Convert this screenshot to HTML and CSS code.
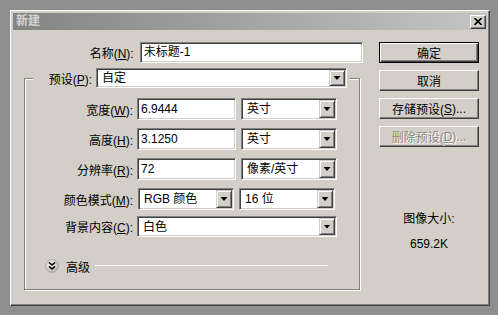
FILE: index.html
```html
<!DOCTYPE html>
<html lang="zh-CN">
<head>
    <meta charset="UTF-8">
    <title>新建</title>
    <link rel="stylesheet" href="styles.css">
</head>
<body>
    <div class="dialog">
        <div class="titlebar">
            <span class="title">新建</span>
            <span class="close-btn">
                <svg width="8" height="7" viewBox="0 0 8 7"><path d="M0.5 0 L7.5 7 M7.5 0 L0.5 7" stroke="#000" stroke-width="1.6" fill="none"/></svg>
            </span>
        </div>

        <div class="content">
            <div class="main">
                <div class="name-row">
                    <span class="name-label">名称(<u>N</u>):</span>
                    <div class="field name-field">未标题-1</div>
                </div>

                <fieldset class="group">
                    <legend class="legend">
                        <div class="preset">
                            <span class="preset-label">预设(<u>P</u>):</span>
                            <div class="select preset-select"><span class="value">自定</span><span class="arrow"></span></div>
                        </div>
                    </legend>

                    <div class="rows">
                        <div class="row">
                            <span class="label">宽度(<u>W</u>):</span>
                            <div class="field num">6.9444</div>
                            <div class="select unit"><span class="value">英寸</span><span class="arrow"></span></div>
                        </div>
                        <div class="row">
                            <span class="label">高度(<u>H</u>):</span>
                            <div class="field num">3.1250</div>
                            <div class="select unit"><span class="value">英寸</span><span class="arrow"></span></div>
                        </div>
                        <div class="row">
                            <span class="label">分辨率(<u>R</u>):</span>
                            <div class="field num">72</div>
                            <div class="select unit"><span class="value">像素/英寸</span><span class="arrow"></span></div>
                        </div>
                        <div class="row">
                            <span class="label">颜色模式(<u>M</u>):</span>
                            <div class="select mode"><span class="value">RGB 颜色</span><span class="arrow"></span></div>
                            <div class="select unit"><span class="value">16 位</span><span class="arrow"></span></div>
                        </div>
                        <div class="row row-bg">
                            <span class="label">背景内容(<u>C</u>):</span>
                            <div class="select wide"><span class="value">白色</span><span class="arrow"></span></div>
                        </div>
                    </div>

                    <div class="advanced">
                        <svg class="adv-icon" width="14" height="14" viewBox="0 0 14 14">
                            <defs>
                                <radialGradient id="knob" cx="40%" cy="35%" r="70%">
                                    <stop offset="0" stop-color="#ffffff"/>
                                    <stop offset="1" stop-color="#b4b0ac"/>
                                </radialGradient>
                            </defs>
                            <circle cx="7" cy="7" r="6.3" fill="url(#knob)" stroke="#a09c98" stroke-width="0.8"/>
                            <path d="M4 3.3 L7 6 L10 3.3 M4 7.3 L7 10 L10 7.3" fill="none" stroke="#000" stroke-width="1.6"/>
                        </svg>
                        <span class="adv-text">高级</span>
                        <span class="adv-line"></span>
                    </div>
                </fieldset>
            </div>

            <div class="side">
                <div class="btn btn-default">确定</div>
                <div class="btn">取消</div>
                <div class="btn">存储预设(<u>S</u>)...</div>
                <div class="btn btn-disabled">删除预设(<u>D</u>)...</div>

                <div class="info">
                    <div class="info-line">图像大小:</div>
                    <div class="info-line info-size">659.2K</div>
                </div>
            </div>
        </div>
    </div>
</body>
</html>
```

FILE: styles.css
```css
* {
    box-sizing: border-box;
}
body {
    margin: 0;
    width: 498px;
    height: 315px;
    overflow: hidden;
    background: #8e8e8e;
    font-family: "Liberation Sans", "Noto Sans CJK SC", sans-serif;
    font-size: 12px;
    color: #000;
}
u {
    text-decoration: underline;
}
.dialog {
    margin: 10px 0 0 10px;
    width: 480px;
    height: 296px;
    padding: 2px;
    background: #d4cec8;
    border: 1px solid;
    border-color: #fff #404040 #404040 #fff;
    box-shadow: inset -1px -1px 0 #808080;
}
.titlebar {
    height: 17px;
    display: flex;
    align-items: center;
    justify-content: space-between;
    padding: 0 1px 0 3px;
    background: linear-gradient(to right, #848484, #c4c4c4);
}
.title {
    color: #d8d4d0;
    font-weight: bold;
    line-height: 17px;
}
.close-btn {
    width: 16px;
    height: 14px;
    display: flex;
    align-items: center;
    justify-content: center;
    background: #d4cec8;
    border: 1px solid;
    border-color: #fff #404040 #404040 #fff;
    box-shadow: inset -1px -1px 0 #808080;
}
.content {
    display: flex;
    padding-top: 12px;
}
.main {
    width: 350px;
}
.side {
    width: 100px;
    margin-left: 16px;
    display: flex;
    flex-direction: column;
    gap: 7px;
}

/* sunken boxes */
.field,
.select {
    height: 22px;
    background: #fff;
    border: 1px solid;
    border-color: #808080 #fff #fff #808080;
    box-shadow: inset 1px 1px 0 #404040, inset -1px -1px 0 #d4cec8;
}
.field {
    padding: 0 3px;
    line-height: 20px;
    white-space: nowrap;
}
.select {
    display: flex;
    align-items: stretch;
    padding: 1px 1px 1px 5px;
}
.select .value {
    flex: 1;
    line-height: 18px;
    white-space: nowrap;
}
.arrow {
    width: 16px;
    display: flex;
    align-items: center;
    justify-content: center;
    background: #d4cec8;
    border: 1px solid;
    border-color: #d4cec8 #404040 #404040 #d4cec8;
    box-shadow: inset 1px 1px 0 #fff, inset -1px -1px 0 #808080;
}
.arrow::after {
    content: "";
    width: 7px;
    height: 4px;
    background: #000;
    clip-path: polygon(0 0, 100% 0, 50% 100%);
}

/* name */
.name-row {
    display: flex;
    align-items: center;
}
.name-label {
    width: 127px;
    padding-right: 6px;
    text-align: right;
}
.name-field {
    width: 224px;
    height: 21px;
    line-height: 19px;
}

/* group box */
.group {
    margin: 5px 0 0 11px;
    padding: 0 0 15px 0;
    width: 336px;
    min-inline-size: 0;
    border: 1px solid #808080;
    box-shadow: 1px 1px 0 #fff, inset 1px 1px 0 #fff;
}
.legend {
    margin-left: 8px;
    padding: 0;
    background: #d4cec8;
}
.preset {
    display: flex;
    align-items: center;
    padding-right: 2px;
}
.preset-label {
    width: 63px;
    padding-right: 4px;
    text-align: right;
}
.preset-select {
    width: 251px;
    height: 20px;
}
.preset-select .value {
    line-height: 16px;
}
.rows {
    padding-top: 10px;
    display: flex;
    flex-direction: column;
    gap: 8px;
}
.row {
    display: flex;
    align-items: center;
}
.row-bg {
    margin-top: -2px;
}
.label {
    width: 112px;
    padding-right: 4px;
    text-align: right;
    white-space: nowrap;
}
.num {
    width: 99px;
}
.unit {
    width: 96px;
    margin-left: 5px;
}
.mode {
    width: 96px;
    margin-left: 1px;
}
.wide {
    width: 200px;
    height: 21px;
}

/* advanced */
.advanced {
    display: flex;
    align-items: center;
    height: 16px;
    margin-top: 21px;
    padding-left: 20px;
}
.adv-text {
    margin-left: 7px;
}
.adv-line {
    flex: 1;
    height: 1px;
    margin: -2px 31px 0 5px;
    background: #fff;
}

/* buttons */
.btn {
    height: 21px;
    display: flex;
    align-items: center;
    justify-content: center;
    white-space: nowrap;
    background: #d4cec8;
    border: 1px solid;
    border-color: #fff #404040 #404040 #fff;
    box-shadow: inset -1px -1px 0 #808080;
}
.btn-default {
    border-color: #000;
    box-shadow: inset 1px 1px 0 #fff, inset -1px -1px 0 #404040, inset -2px -2px 0 #808080;
}
.btn-disabled {
    color: #8c8884;
    text-shadow: 1px 1px 0 #fff;
}
.info {
    margin-top: 57px;
    display: flex;
    flex-direction: column;
    align-items: center;
    gap: 9px;
}
.info-line {
    line-height: 16px;
}
```
